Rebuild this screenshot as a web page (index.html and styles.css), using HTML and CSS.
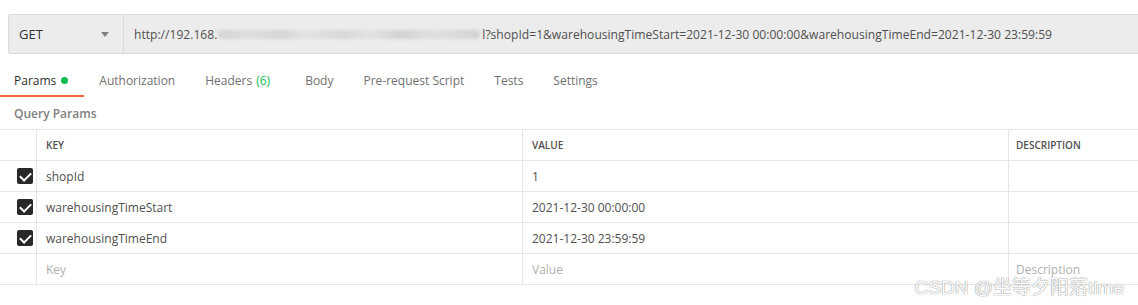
FILE: index.html
```html
<!DOCTYPE html>
<html lang="en">
<head>
<meta charset="UTF-8">
<meta name="viewport" content="width=device-width, initial-scale=1.0">
<title>Request - Params</title>
<link rel="stylesheet" href="styles.css">
</head>
<body>

<div class="url-bar">
    <div class="method">
        <span>GET</span>
        <span class="caret"></span>
    </div>
    <div class="url">http://192.168.<span class="blur"></span>l?shopId=1&amp;warehousingTimeStart=2021-12-30 00:00:00&amp;warehousingTimeEnd=2021-12-30 23:59:59</div>
</div>

<div class="tabs">
    <div class="tab active">Params <span class="dot"></span></div>
    <div class="tab">Authorization</div>
    <div class="tab">Headers <span class="count">(6)</span></div>
    <div class="tab tab-wide">Body</div>
    <div class="tab">Pre-request Script</div>
    <div class="tab">Tests</div>
    <div class="tab">Settings</div>
</div>

<div class="section-title">Query Params</div>

<div class="params">
    <div class="row head">
        <div class="cell check"></div>
        <div class="cell">KEY</div>
        <div class="cell">VALUE</div>
        <div class="cell desc">DESCRIPTION</div>
    </div>
    <div class="row">
        <div class="cell check"><span class="box"></span></div>
        <div class="cell">shopId</div>
        <div class="cell">1</div>
        <div class="cell desc"></div>
    </div>
    <div class="row">
        <div class="cell check"><span class="box"></span></div>
        <div class="cell">warehousingTimeStart</div>
        <div class="cell">2021-12-30 00:00:00</div>
        <div class="cell desc"></div>
    </div>
    <div class="row">
        <div class="cell check"><span class="box"></span></div>
        <div class="cell">warehousingTimeEnd</div>
        <div class="cell">2021-12-30 23:59:59</div>
        <div class="cell desc"></div>
    </div>
    <div class="row placeholder">
        <div class="cell check"></div>
        <div class="cell">Key</div>
        <div class="cell">Value</div>
        <div class="cell desc">Description</div>
    </div>
</div>

<div class="watermark">CSDN @坐等夕阳落time</div>

</body>
</html>
```

FILE: styles.css
```css
* {
    box-sizing: border-box;
}
body {
    font-family: "Open Sans", sans-serif;
    font-size: 12px;
    color: #505050;
    margin: 0;
    padding-top: 14px;
    background: #fff;
    position: relative;
    height: 305px;
    overflow: hidden;
}
.url-bar {
    display: flex;
    height: 40px;
    margin-left: 8px;
    background: #ececec;
    border: 1px solid #d9d9d9;
    border-right: none;
    border-radius: 3px 0 0 3px;
}
.method {
    width: 115px;
    padding: 0 0 0 10px;
    display: flex;
    align-items: center;
    justify-content: space-between;
    border-right: 1px solid #d9d9d9;
    font-size: 13px;
    color: #333;
}
.caret {
    width: 0;
    height: 0;
    border-left: 4px solid transparent;
    border-right: 4px solid transparent;
    border-top: 5px solid #808080;
    margin-right: 14px;
}
.url {
    display: flex;
    align-items: center;
    padding-left: 10px;
    white-space: pre;
    color: #505050;
    font-size: 12.1px;
}
/* masked part of the address */
.blur {
    display: inline-block;
    width: 262px;
    height: 9px;
    margin: 0 2px 0 1px;
    border-radius: 4px;
    background: linear-gradient(90deg, #d4d4d4 0, #dedede 12%, #d6d6d6 25%, #e4e4e4 33%, #d8d8d8 48%, #e2e2e2 58%, #d3d3d3 70%, #e0e0e0 82%, #d2d2d2 100%);
    filter: blur(1.5px);
}
.tabs {
    display: flex;
    margin-top: 12px;
    height: 31px;
}
.tab {
    padding: 0 15px;
    display: flex;
    align-items: center;
    color: #707070;
    border-bottom: 2px solid transparent;
}
.tab.active {
    color: #303030;
    padding-left: 14px;
    padding-right: 16px;
    border-bottom-color: #f26b3a;
}
.tab-wide {
    padding-left: 20px;
}
.dot {
    display: inline-block;
    width: 7px;
    height: 7px;
    border-radius: 50%;
    background: #0cbb52;
    margin-left: 5px;
}
.count {
    color: #0cbb52;
    margin-left: 4px;
}
.section-title {
    height: 32px;
    line-height: 34px;
    padding-left: 14px;
    color: #808080;
    font-weight: 600;
}
.params {
    border-top: 1px solid #e6e6e6;
}
.row {
    display: grid;
    grid-template-columns: 36px 486px 486px 1fr;
    height: 31px;
    border-bottom: 1px solid #e6e6e6;
}
.cell {
    display: flex;
    align-items: center;
    padding-left: 9px;
    border-left: 1px solid #e6e6e6;
    color: #505050;
}
.cell.check {
    border-left: none;
    padding: 0 3px 0 0;
    justify-content: flex-end;
}
.cell.desc {
    padding-left: 7px;
}
.row.head .cell {
    font-size: 10px;
    font-weight: 600;
    color: #505050;
}
.row.placeholder .cell {
    color: #b0b0b0;
}
.box {
    width: 16px;
    height: 16px;
    border-radius: 2px;
    background: #282828;
    position: relative;
}
.box::after {
    content: "";
    position: absolute;
    left: 5px;
    top: 2px;
    width: 5px;
    height: 9px;
    border: solid #fff;
    border-width: 0 2px 2px 0;
    transform: rotate(45deg);
}
.watermark {
    position: absolute;
    right: 14px;
    bottom: 6px;
    font-family: "Liberation Sans", "Noto Sans CJK SC", sans-serif;
    font-size: 19px;
    color: #fff;
    text-shadow: 0 0 1px #888, 0 0 1px #999;
}
```
